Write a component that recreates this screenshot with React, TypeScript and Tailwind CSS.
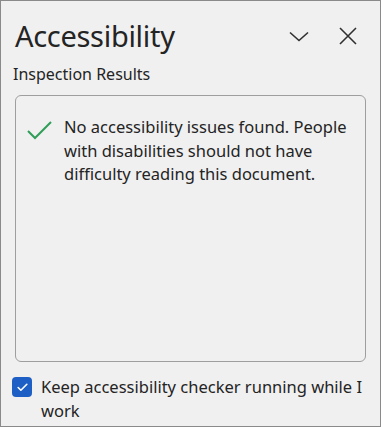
import { Check } from 'lucide-react';

function App() {
  return (
    <div
      className="w-[381px] h-[427px] bg-[#f0f0f0] border border-[#8a8a8a] flex flex-col text-[#242424]"
      style={{ fontFamily: '"Noto Sans", "Open Sans", sans-serif' }}
    >
      {/* Header */}
      <div className="flex items-center justify-between pl-[14px] pr-[22px] pt-[13px] h-[56px]">
        <h1 className="text-[29px] leading-none font-normal tracking-[-0.3px]">Accessibility</h1>
        <div className="flex items-center gap-[28px]">
          <svg width="22" height="22" viewBox="0 0 22 22" fill="none" stroke="#303030" strokeWidth="1.6">
            <path d="M2 7.5 L11 15.5 L20 7.5" />
          </svg>
          <svg width="20" height="20" viewBox="0 0 20 20" fill="none" stroke="#303030" strokeWidth="1.6">
            <path d="M2 2 L18 18 M18 2 L2 18" />
          </svg>
        </div>
      </div>

      <div className="pl-[12px] text-[16px] leading-[22px] mt-[6px]">Inspection Results</div>

      {/* Results box */}
      <div className="mx-[14px] mt-[10px] h-[267px] border border-[#9e9e9e] rounded-[6px] pt-[19px] pl-[10px] pr-[6px] flex gap-[10px]">
        <svg width="28" height="24" viewBox="0 0 28 24" fill="none" stroke="#2f9e58" strokeWidth="2" className="mt-[3px] shrink-0">
          <path d="M2 13 L9 20 L25 4" />
        </svg>
        <p className="text-[16.5px] leading-[23.5px]">
          No accessibility issues found. People with disabilities should not have difficulty reading this document.
        </p>
      </div>

      {/* Checkbox */}
      <div className="flex gap-[9px] pl-[11px] pr-[12px] mt-[13px]">
        <div className="w-[20px] h-[20px] rounded-[4px] bg-[#1d5fc4] flex items-center justify-center shrink-0 mt-[2px]">
          <Check className="w-[13px] h-[13px] text-white" strokeWidth={3} />
        </div>
        <label className="text-[16.5px] leading-[23.5px]">Keep accessibility checker running while I work</label>
      </div>
    </div>
  );
}

export default App;
